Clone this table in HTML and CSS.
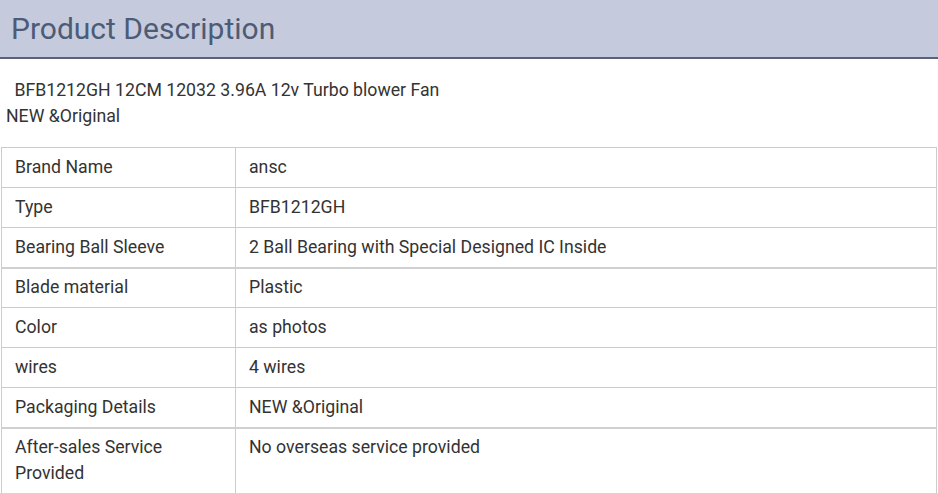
FILE: index.html
```html
<!DOCTYPE html>
<html>
<head>
<meta charset="utf-8">
<link rel="stylesheet" href="styles.css">
</head>
<body>
<div class="page">
  <div class="band"><h2 class="title">Product Description</h2></div>
  <div class="intro">
    <p class="line1">&nbsp;BFB1212GH 12CM 12032 3.96A 12v Turbo blower Fan</p>
    <p class="line2">NEW &amp;Original</p>
  </div>
  <table class="spec">
    <tbody>
      <tr><td class="k">Brand Name</td><td>ansc</td></tr>
      <tr><td class="k">Type</td><td>BFB1212GH</td></tr>
      <tr><td class="k">Bearing Ball Sleeve</td><td>2 Ball Bearing with Special Designed IC Inside</td></tr>
    </tbody>
    <tbody>
      <tr><td class="k">Blade material</td><td>Plastic</td></tr>
      <tr><td class="k">Color</td><td>as photos</td></tr>
      <tr><td class="k">wires</td><td>4 wires</td></tr>
      <tr><td class="k">Packaging Details</td><td>NEW &amp;Original</td></tr>
    </tbody>
    <tbody>
      <tr class="tall"><td class="k">After-sales Service Provided</td><td>No overseas service provided</td></tr>
    </tbody>
  </table>
</div>
</body>
</html>
```
FILE: styles.css
```css
html, body {
  margin: 0;
  padding: 0;
  background: #ffffff;
}
.page {
  font-family: Roboto, "Liberation Sans", sans-serif;
  color: #333333;
  padding-left: 1px;
  width: 937px;
}
.band {
  background: #c5cbdc;
  border-bottom: 2px solid #5b6378;
  height: 57px;
  margin-left: -1px;
  padding-left: 11px;
}
.title {
  margin: 0;
  font-weight: 400;
  font-size: 30px;
  line-height: 57px;
  color: #4d5b76;
}
.intro {
  padding-top: 18px;
  font-size: 17.7px;
  line-height: 26px;
}
.intro p {
  margin: 0;
}
.line1 {
  padding-left: 9px;
}
.line2 {
  padding-left: 5px;
}
.spec {
  margin-top: 18px;
  width: 936px;
  border-collapse: collapse;
  font-size: 17.7px;
  line-height: 26px;
  color: #333333;
}
.spec td {
  border: 1px solid #cccccc;
  padding: 6px 13px 7px 13px;
  vertical-align: top;
  text-align: left;
}
.spec td.k {
  width: 207px;
}
.spec tbody + tbody tr:first-child td {
  border-top: 2px solid #d0d0d0;
  padding-top: 5px;
}
```
